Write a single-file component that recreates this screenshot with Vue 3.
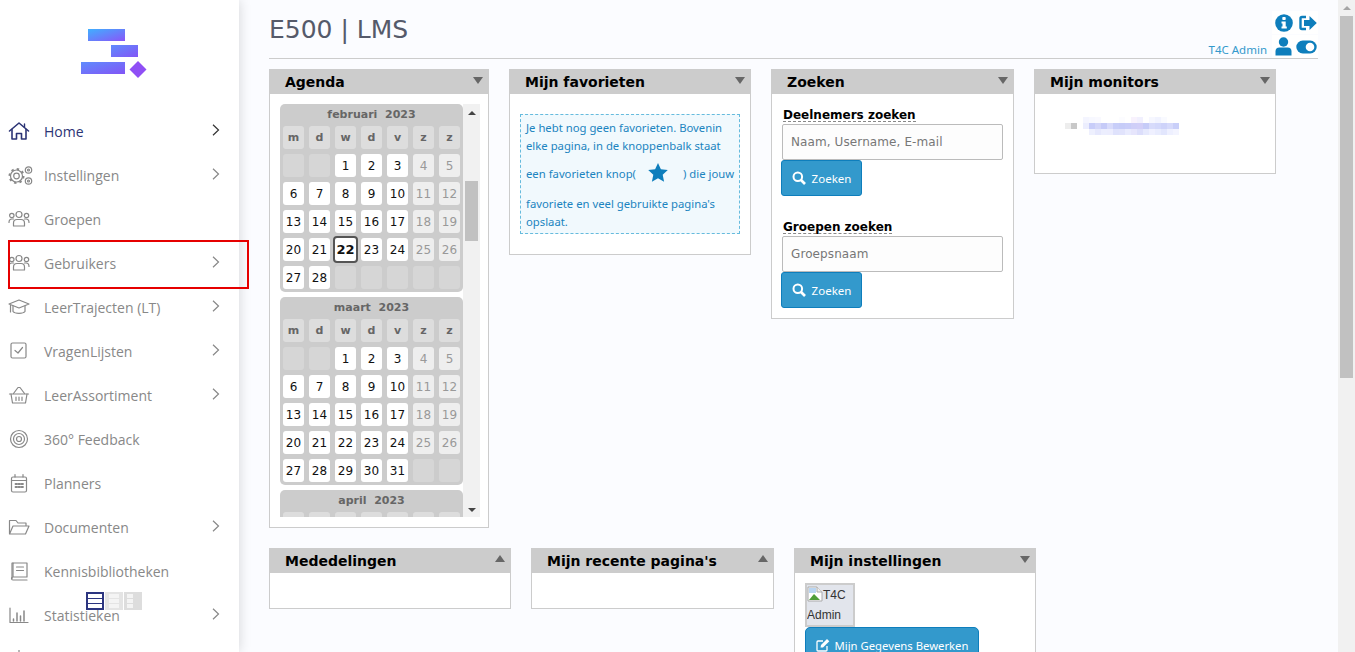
<script setup>
const menu = [
  { label: 'Home', icon: 'home', chev: true, active: true },
  { label: 'Instellingen', icon: 'gears', chev: true },
  { label: 'Groepen', icon: 'group' },
  { label: 'Gebruikers', icon: 'group', chev: true },
  { label: 'LeerTrajecten (LT)', icon: 'cap', chev: true },
  { label: 'VragenLijsten', icon: 'check', chev: true },
  { label: 'LeerAssortiment', icon: 'basket', chev: true },
  { label: '360° Feedback', icon: 'target' },
  { label: 'Planners', icon: 'cal' },
  { label: 'Documenten', icon: 'folder', chev: true },
  { label: 'Kennisbibliotheken', icon: 'book' },
  { label: 'Statistieken', icon: 'chart', chev: true }
]
const heads = ['m', 'd', 'w', 'd', 'v', 'z', 'z']
const makeMonth = (title, offset, days) => {
  const cells = []
  for (let i = 0; i < offset; i++) cells.push({ t: '', c: 'empty' })
  for (let d = 1; d <= days; d++) {
    const col = (offset + d - 1) % 7
    cells.push({ t: d, c: col > 4 ? 'weekend' : 'day' })
  }
  while (cells.length < 35) cells.push({ t: '', c: 'empty' })
  return { title, cells }
}
const months = [
  makeMonth('februari  2023', 2, 28),
  makeMonth('maart  2023', 2, 31),
  makeMonth('april  2023', 5, 30)
]
const blurRows = [
  ['#f4f5ff','#f7f8ff','#f9f9ff','#fff','#fff','#fff','#fcfcff','#fff','#f8f2fd','#f1f0fe','#fff','#f6f7ff','#f1f3ff','#f9faff','#fff','#fff'],
  ['#eceefe','#c8cdf9','#d3d6f9','#c6cbf8','#d8dbfb','#c8cef9','#c6ccf8','#c9cdf9','#cfcff8','#d2cff8','#c6ccf8','#d7dbfb','#d3d8fb','#ced3fa','#d6dafb','#c9cff9'],
  ['#fff','#eef0fe','#e6e8fd','#eceefe','#ecedfe','#dfe2fc','#e1e3fc','#e9ebfe','#e6e5fc','#dcdefb','#e6e9fd','#eff0ff','#e9ecfe','#e2e6fd','#eef0ff','#f3f4ff']
]
const blurCells = []
blurRows.forEach((row, r) => row.forEach((f, c) => blurCells.push({ x: 18 + c * 6, y: r * 6, f })))
</script>

<template>
  <div class="app">
    <aside class="sidebar">
      <div class="logo">
        <svg width="70" height="56" viewBox="0 0 70 56">
          <defs>
            <linearGradient id="lg" x1="0" y1="0" x2="1" y2="1" gradientUnits="objectBoundingBox">
              <stop offset="0" stop-color="#3fb0ff" />
              <stop offset="1" stop-color="#8a55f8" />
            </linearGradient>
            <linearGradient id="lg2" x1="0" y1="0" x2="1" y2="1">
              <stop offset="0" stop-color="#5f8cfd" />
              <stop offset="1" stop-color="#8255f6" />
            </linearGradient>
          </defs>
          <rect x="7" y="0" width="37" height="12" fill="url(#lg)" />
          <rect x="30" y="16" width="27" height="12" fill="url(#lg2)" />
          <rect x="0" y="33" width="44" height="12" fill="url(#lg2)" />
          <polygon points="57,32 65.500,40.500 57,49 48.500,40.500" fill="#8f4ff5" />
        </svg>
      </div>
      <nav class="menu">
        <div v-for="m in menu" :key="m.label" class="item" :class="{ active: m.active }">
          <span class="ic">
            <svg width="22" height="22" viewBox="0 0 22 22" fill="none" stroke="currentColor" stroke-width="1.200" stroke-linecap="round" stroke-linejoin="round">
              <template v-if="m.icon === 'home'">
                <path d="M1.500 11 L11 3 L20.500 11" stroke-width="1.600" />
                <path d="M4 9.500 V19 H8.500 V13.500 H13.500 V19 H18 V9.500" stroke-width="1.600" />
                <path d="M16.500 4 V7" stroke-width="1.400" />
              </template>
              <template v-else-if="m.icon === 'gears'">
                <circle cx="8.500" cy="12" r="2.800" />
                <circle cx="8.500" cy="12" r="6" />
                <circle cx="8.500" cy="12" r="7" stroke-width="2" stroke-dasharray="2.400 3.100" stroke-linecap="butt" />
                <circle cx="20.500" cy="6" r="3.200" />
                <circle cx="20.500" cy="6" r="1" />
                <circle cx="20.500" cy="17" r="3.200" />
                <circle cx="20.500" cy="17" r="1" />
              </template>
              <template v-else-if="m.icon === 'group'">
                <circle cx="11" cy="6.500" r="3" />
                <circle cx="3.800" cy="7.500" r="2.200" />
                <circle cx="18.500" cy="7.500" r="2.200" />
                <path d="M5.500 18 V15 C5.500 12.500 7.500 11.500 9 11.500 H13 C14.500 11.500 16.500 12.500 16.500 15 V18 Z" />
                <path d="M1 14.500 C1 12 2.500 11 4 11 H5.500 M21 14.500 C21 12 19.500 11 18 11 H16.500" />
              </template>
              <template v-else-if="m.icon === 'cap'">
                <path d="M1 8 L11 4 L21 8 L11 12 Z" />
                <path d="M5 10 V15.500 C7 18 15 18 17 15.500 V10" />
                <path d="M2.500 9 V16" />
              </template>
              <template v-else-if="m.icon === 'check'">
                <rect x="3" y="3" width="15" height="15" rx="1.500" />
                <path d="M7 10.500 L10 13 L14.500 7.500" />
              </template>
              <template v-else-if="m.icon === 'basket'">
                <path d="M1.500 10 H20.500" />
                <path d="M3 10 L4.500 19 H17.500 L19 10" />
                <path d="M5.500 9.500 L10 3.500 H12 L16.500 9.500" />
                <path d="M8 13 V16.500 M11 13 V16.500 M14 13 V16.500" />
              </template>
              <template v-else-if="m.icon === 'target'">
                <circle cx="11" cy="11" r="8.500" />
                <circle cx="11" cy="11" r="5.500" />
                <circle cx="11" cy="11" r="2.500" />
              </template>
              <template v-else-if="m.icon === 'cal'">
                <rect x="3.500" y="5" width="15" height="15" rx="1.500" />
                <path d="M3.500 8.500 H18.500 M7 2.500 V5 M15 2.500 V5" />
                <path d="M7.500 12 H9 M10.500 12 H12 M13.500 12 H15 M7.500 15 H9 M10.500 15 H12 M13.500 15 H15" stroke-width="1.800" />
              </template>
              <template v-else-if="m.icon === 'folder'">
                <path d="M1.500 17.500 V4.500 H8 L10 7 H18 V9.500" />
                <path d="M1.500 18 L5 10 H21 L17.500 18 Z" />
              </template>
              <template v-else-if="m.icon === 'book'">
                <path d="M5 17 V3 H19 V17 H5 C3 17 3 20 5 20 H19" />
                <path d="M5 3 H4 V18.500" />
                <path d="M8.500 7 H15.500 M8.500 10.500 H15.500" />
              </template>
              <template v-else-if="m.icon === 'chart'">
                <path d="M2 4 V18.500 H20" />
                <path d="M5.500 15 V17 M9 9 V17 M12.500 12 V17 M16 7 V17" stroke-width="1.500" />
              </template>
            </svg>
          </span>
          <span class="lbl">{{ m.label }}</span>
          <svg v-if="m.chev" class="chev" width="8" height="12" viewBox="0 0 8 12" fill="none" stroke="currentColor" stroke-width="1.200">
            <path d="M1 .8 L6.500 6 L1 11.200" />
          </svg>
        </div>
        <div class="item">
          <span class="ic">
            <svg width="22" height="22" viewBox="0 0 22 22" fill="none" stroke="currentColor" stroke-width="1.200"><path d="M11 2 V6 M4 6 H18" /></svg>
          </span>
        </div>
      </nav>
      <div class="switch">
        <span class="sw on"><i></i><i></i><i></i></span>
        <span class="sw"><i></i><i></i><i></i></span>
        <span class="sw narrow"><i></i><i></i><i></i></span>
      </div>
    </aside>
    <div class="annot"></div>

    <main class="main">
      <header class="top">
        <h1>E500 | LMS</h1>
        <div class="tools">
          <div class="tool-row">
            <span class="tools-box">
              <svg width="18" height="18" viewBox="0 0 18 18"><circle cx="9" cy="9" r="8.800" fill="#0e7ebc" /><rect x="7.300" y="3" width="3.400" height="3" rx=".8" fill="#fff" /><path d="M6.500 7.500 H10.700 V12.500 H11.800 V14.500 H6.500 V12.500 H7.500 V9.500 H6.500 Z" fill="#fff" /></svg>
              <svg width="18" height="16" viewBox="0 0 18 16"><path d="M7 2 H3 Q1.500 2 1.500 3.500 V12.500 Q1.500 14 3 14 H7" fill="none" stroke="#0e7ebc" stroke-width="2.400" /><path d="M10.500 1 L17.800 8 L10.500 15 V11 H5 V5 H10.500 Z" fill="#0e7ebc" /></svg>
            </span>
          </div>
          <div class="tool-row">
            <span class="uname">T4C Admin</span>
            <span class="tools-box">
              <svg width="17" height="19" viewBox="0 0 17 19"><circle cx="8.500" cy="5" r="4.700" fill="#0e7ebc" /><path d="M0.500 18.500 V14.500 Q0.500 10.500 4.500 10.500 H12.500 Q16.500 10.500 16.500 14.500 V18.500 Z" fill="#0e7ebc" /></svg>
              <svg width="21" height="14" viewBox="0 0 21 14"><rect x="0.300" y="0.500" width="20.400" height="13" rx="6.500" fill="#0e7ebc" /><circle cx="14" cy="7" r="4.300" fill="#fff" /></svg>
            </span>
          </div>
        </div>
      </header>

      <section class="row">
        <article class="panel w-agenda">
          <div class="ph"><span>Agenda</span><i class="tri down"></i></div>
          <div class="agenda-body">
            <div class="cal-scroll">
              <div class="cal-list">
                <div v-for="mo in months" :key="mo.title" class="month">
                  <div class="m-title">{{ mo.title }}</div>
                  <div class="m-grid">
                    <span v-for="(h, i) in heads" :key="'h' + i" class="c head">{{ h }}</span>
                    <span v-for="(c, i) in mo.cells" :key="i" class="c" :class="[c.c, { today: mo.title.startsWith('feb') && c.t === 22 }]">{{ c.t }}</span>
                  </div>
                </div>
              </div>
              <div class="mini-bar">
                <i class="tri-s up"></i>
                <div class="mini-thumb"></div>
                <i class="tri-s dn"></i>
              </div>
            </div>
          </div>
        </article>

        <article class="panel w-fav">
          <div class="ph"><span>Mijn favorieten</span><i class="tri down"></i></div>
          <div class="fav-body">
            <div class="note">
              Je hebt nog geen favorieten. Bovenin<br />elke pagina, in de knoppenbalk staat<br />een favorieten knop(<span class="star"><svg width="20" height="19" viewBox="0 0 20 19"><path d="M10 0 L12.900 6.300 L19.800 7.100 L14.700 11.800 L16.100 18.700 L10 15.200 L3.900 18.700 L5.300 11.800 L.2 7.100 L7.100 6.300 Z" fill="#0e7ebc" /></svg></span>) die jouw<br />favoriete en veel gebruikte pagina's<br />opslaat.
            </div>
          </div>
        </article>

        <article class="panel w-zoek">
          <div class="ph"><span>Zoeken</span><i class="tri down"></i></div>
          <div class="zoek-body">
            <div class="z-group">
              <span class="z-label">Deelnemers zoeken</span>
              <div class="fake-input">Naam, Username, E-mail</div>
              <button class="btn"><svg width="14" height="14" viewBox="0 0 14 14" fill="none" stroke="#fff" stroke-width="2"><circle cx="5.800" cy="5.800" r="4.300" /><path d="M9 9 L13 13" stroke-width="2.600" /></svg>Zoeken</button>
            </div>
            <div class="z-group">
              <span class="z-label">Groepen zoeken</span>
              <div class="fake-input">Groepsnaam</div>
              <button class="btn"><svg width="14" height="14" viewBox="0 0 14 14" fill="none" stroke="#fff" stroke-width="2"><circle cx="5.800" cy="5.800" r="4.300" /><path d="M9 9 L13 13" stroke-width="2.600" /></svg>Zoeken</button>
            </div>
          </div>
        </article>

        <article class="panel w-mon">
          <div class="ph"><span>Mijn monitors</span><i class="tri down"></i></div>
          <div class="mon-body">
            <svg width="116" height="18" viewBox="0 0 116 18" shape-rendering="crispEdges">
              <rect x="0" y="6" width="6" height="6" fill="#ededed" />
              <rect x="6" y="6" width="6" height="6" fill="#c8c8c8" />
              <rect v-for="(b, i) in blurCells" :key="i" :x="b.x" :y="b.y" width="6" height="6" :fill="b.f" />
            </svg>
          </div>
        </article>
      </section>

      <section class="row second">
        <article class="panel w-fav">
          <div class="ph"><span>Mededelingen</span><i class="tri upw"></i></div>
          <div class="empty-body"></div>
        </article>
        <article class="panel w-zoek">
          <div class="ph"><span>Mijn recente pagina's</span><i class="tri upw"></i></div>
          <div class="empty-body"></div>
        </article>
        <article class="panel w-fav">
          <div class="ph"><span>Mijn instellingen</span><i class="tri down"></i></div>
          <div class="inst-body">
            <div class="avatar">
              <svg class="broken" width="16" height="16" viewBox="0 0 16 16"><path d="M1 1 H10 L15 6 V15 H1 Z" fill="#fff" stroke="#aaa" /><path d="M10 1 V6 H15" fill="#eee" stroke="#aaa" /><path d="M2 14 L7 8 L13 14 Z" fill="#4f9e3a" /><rect x="2" y="2" width="7" height="5" fill="#b9d5f2" /></svg>T4C Admin
            </div>
            <button class="btn wide"><svg width="14" height="14" viewBox="0 0 14 14" fill="none" stroke="#fff" stroke-width="1.300"><path d="M11 8 V12 Q11 13 10 13 H2 Q1 13 1 12 V4 Q1 3 2 3 H7" /><path d="M4.500 9.500 L5 7 L11 1 L13.300 3.300 L7 9.500 Z" fill="#fff" stroke="none" /></svg>Mijn Gegevens Bewerken</button>
          </div>
        </article>
      </section>
    </main>

    <div class="page-bar">
      <i class="tri-s up page"></i>
      <div class="page-thumb"></div>
    </div>
  </div>
</template>

<style>
html, body { margin: 0; overflow: hidden; }
</style>

<style scoped>
.app {
  display: flex;
  height: 100vh;
  overflow: hidden;
  background: #fbfcff;
  position: relative;
  font-family: "DejaVu Sans", sans-serif;
}
.sidebar {
  flex: none;
  width: 239px;
  background: #fff;
  box-shadow: 0 0 12px rgba(0, 0, 0, .16);
  position: relative;
  z-index: 2;
  overflow: hidden;
}
.logo { padding: 29px 0 0 81px; height: 80px; box-sizing: border-box; }
.logo svg { display: block; }
.menu { padding-top: 29px; }
.item {
  height: 44px;
  display: flex;
  align-items: center;
  color: #888;
  padding-left: 8px;
  font-family: "Open Sans", sans-serif;
  font-size: 14px;
}
.item.active { color: #2c3475; }
.item.active .chev { color: #333; }
.ic { width: 36px; flex: none; display: flex; align-items: center; }
.ic svg { display: block; overflow: visible; }
.lbl { flex: 1; }
.chev { margin-right: 19px; color: #888; margin-top: -2px; }
.switch {
  position: absolute;
  left: 86px;
  top: 592px;
  display: flex;
  gap: 1px;
}
.sw {
  width: 18px;
  height: 18px;
  box-sizing: border-box;
  background: #e4e4e4;
  display: flex;
  flex-direction: column;
  justify-content: center;
  gap: 1px;
  padding: 2px 4px;
}
.sw i { display: block; height: 4px; background: #f4f4f4; flex: none; }
.sw.on { background: #2c3580; padding: 2px; }
.sw.on i { background: #fff; }
.sw.narrow { background: #ddd; padding: 2px 9px 2px 3px; }
.annot {
  position: absolute;
  left: 8px;
  top: 240px;
  width: 241px;
  height: 49px;
  box-sizing: border-box;
  border: 2px solid #e60000;
  z-index: 3;
}
.main {
  flex: 1;
  min-width: 0;
  padding: 0 20px 0 30px;
  overflow: hidden;
}
.top {
  height: 59px;
  box-sizing: border-box;
  border-bottom: 1px solid #ccc;
  display: flex;
  justify-content: space-between;
  align-items: flex-start;
}
h1 {
  margin: 15px 0 0 0;
  font-size: 25px;
  line-height: 30px;
  font-weight: 400;
  color: #555a6a;
}
.tools { padding-top: 11px; display: flex; flex-direction: column; align-items: flex-end; gap: 1px; }
.tool-row { display: flex; align-items: flex-end; }
.tools-box {
  background: #fff;
  width: 46px;
  height: 23px;
  box-sizing: border-box;
  display: flex;
  justify-content: space-between;
  align-items: center;
  padding: 0 1px 0 3px;
}
.uname {
  font-family: "Noto Sans", sans-serif;
  font-size: 11.500px;
  color: #3399cc;
  margin-right: 5px;
  line-height: 16px;
}
.row {
  display: flex;
  gap: 20px;
  align-items: flex-start;
  margin-top: 10px;
}
.row.second { margin-top: 20px; }
.panel {
  flex: none;
  box-sizing: border-box;
  background: #fff;
  border: 1px solid #ccc;
}
.w-agenda { width: 220px; }
.w-fav { width: 242px; }
.w-zoek { width: 243px; }
.w-mon { width: 242px; }
.ph {
  height: 25px;
  margin: -1px -1px 0;
  background: #ccc;
  padding: 0 6px 0 16px;
  display: flex;
  justify-content: space-between;
  font-weight: 700;
  font-size: 14px;
  line-height: 26px;
  color: #000;
}
.tri { width: 0; height: 0; display: block; margin-top: 8px; }
.tri.down { border-left: 5px solid transparent; border-right: 5px solid transparent; border-top: 7px solid #666; }
.tri.upw { border-left: 5px solid transparent; border-right: 5px solid transparent; border-bottom: 7px solid #666; margin-top: 7px; }
.agenda-body { padding: 10px 10px 10px; }
.cal-scroll { display: flex; height: 413px; width: 200px; }
.cal-list { width: 183px; flex: none; overflow: hidden; display: flex; flex-direction: column; gap: 5px; }
.month { background: #ccc; border-radius: 5px; padding: 0 3px 3px; flex: none; }
.m-title {
  height: 22px;
  line-height: 21px;
  text-align: center;
  font-weight: 700;
  font-size: 11px;
  color: #666;
  white-space: pre;
}
.m-grid {
  display: grid;
  grid-template-columns: repeat(7, 21px);
  grid-auto-rows: 23px;
  gap: 5px;
}
.c {
  border-radius: 3px;
  text-align: center;
  line-height: 24px;
  font-size: 12px;
  box-sizing: border-box;
}
.head { background: #ddd; color: #666; font-weight: 700; font-size: 11px; }
.empty { background: #d6d6d6; }
.day { background: #fff; color: #111; }
.weekend { background: #eee; color: #999; }
.today {
  border: 2px solid #555;
  border-radius: 4px;
  font-weight: 700;
  font-size: 13px;
  margin: -2px;
  width: 25px;
  height: 27px;
  line-height: 24px;
}
.mini-bar {
  width: 17px;
  flex: none;
  background: #f1f1f1;
  display: flex;
  flex-direction: column;
  align-items: center;
}
.mini-thumb { width: 13px; height: 60px; background: #c1c1c1; margin-top: 66px; }
.tri-s { width: 0; height: 0; display: block; }
.tri-s.up { border-left: 4px solid transparent; border-right: 4px solid transparent; border-bottom: 4px solid #444; margin-top: 7px; }
.tri-s.dn { border-left: 4px solid transparent; border-right: 4px solid transparent; border-top: 4px solid #444; margin-top: auto; margin-bottom: 5px; }
.fav-body { padding: 20px 10px; }
.note {
  box-sizing: border-box;
  border: 1px dashed #66bbdd;
  background: #f1f9fd;
  padding: 4px 5px 2px;
  font-family: "Noto Sans", sans-serif;
  font-size: 11.300px;
  line-height: 18px;
  color: #1b84c0;
  white-space: nowrap;
}
.star {
  display: inline-block;
  height: 40px;
  padding: 0 15px 0 12px;
  vertical-align: middle;
}
.star svg { display: block; margin-top: 8px; }
.zoek-body { padding: 12px 10px 10px 9px; display: flex; flex-direction: column; gap: 22px; }
.z-group { display: flex; flex-direction: column; align-items: flex-start; }
.z-label {
  font-size: 12px;
  font-weight: 700;
  line-height: 17px;
  margin-left: 2px;
  color: #000;
  border-bottom: 1px dashed #888;
  height: 14px;
  margin-top: 1px;
  margin-bottom: 2px;
}
.fake-input {
  box-sizing: border-box;
  width: 221px;
  height: 36px;
  margin-left: 1px;
  border: 1px solid #bbb;
  border-radius: 2px;
  background: #fdfdfd;
  color: #777;
  font-size: 12px;
  letter-spacing: .1px;
  line-height: 34px;
  padding-left: 8px;
}
.btn {
  box-sizing: border-box;
  height: 36px;
  width: 81px;
  border: 1px solid #0e7ebc;
  border-radius: 3px;
  background: #3399cc;
  color: #fff;
  font-family: "Noto Sans", sans-serif;
  font-size: 11.500px;
  padding: 0;
  display: flex;
  align-items: center;
  justify-content: center;
  gap: 6px;
}
.mon-body { height: 79px; box-sizing: border-box; padding: 23px 0 0 30px; }
.mon-body svg { display: block; }
.empty-body { height: 35px; }
.inst-body { padding: 10px 10px 0; height: 200px; }
.avatar {
  box-sizing: border-box;
  width: 50px;
  height: 44px;
  background: #e2e5ec;
  border: 2px solid #ccc;
  font-family: "Liberation Sans", sans-serif;
  font-size: 12px;
  line-height: 20px;
  color: #333;
  overflow: hidden;
}
.broken { vertical-align: -3px; }
.btn.wide {
  width: 174px;
  border-radius: 5px 5px 0 0;
  font-size: 11.300px;
  gap: 5px;
}
.page-bar {
  flex: none;
  width: 17px;
  background: #f1f1f1;
  display: flex;
  flex-direction: column;
  align-items: center;
}
.tri-s.page { border-bottom-color: #a5a5a5; margin-top: 6px; }
.page-thumb { width: 13px; height: 362px; background: #c1c1c1; margin-top: 6px; }
</style>
